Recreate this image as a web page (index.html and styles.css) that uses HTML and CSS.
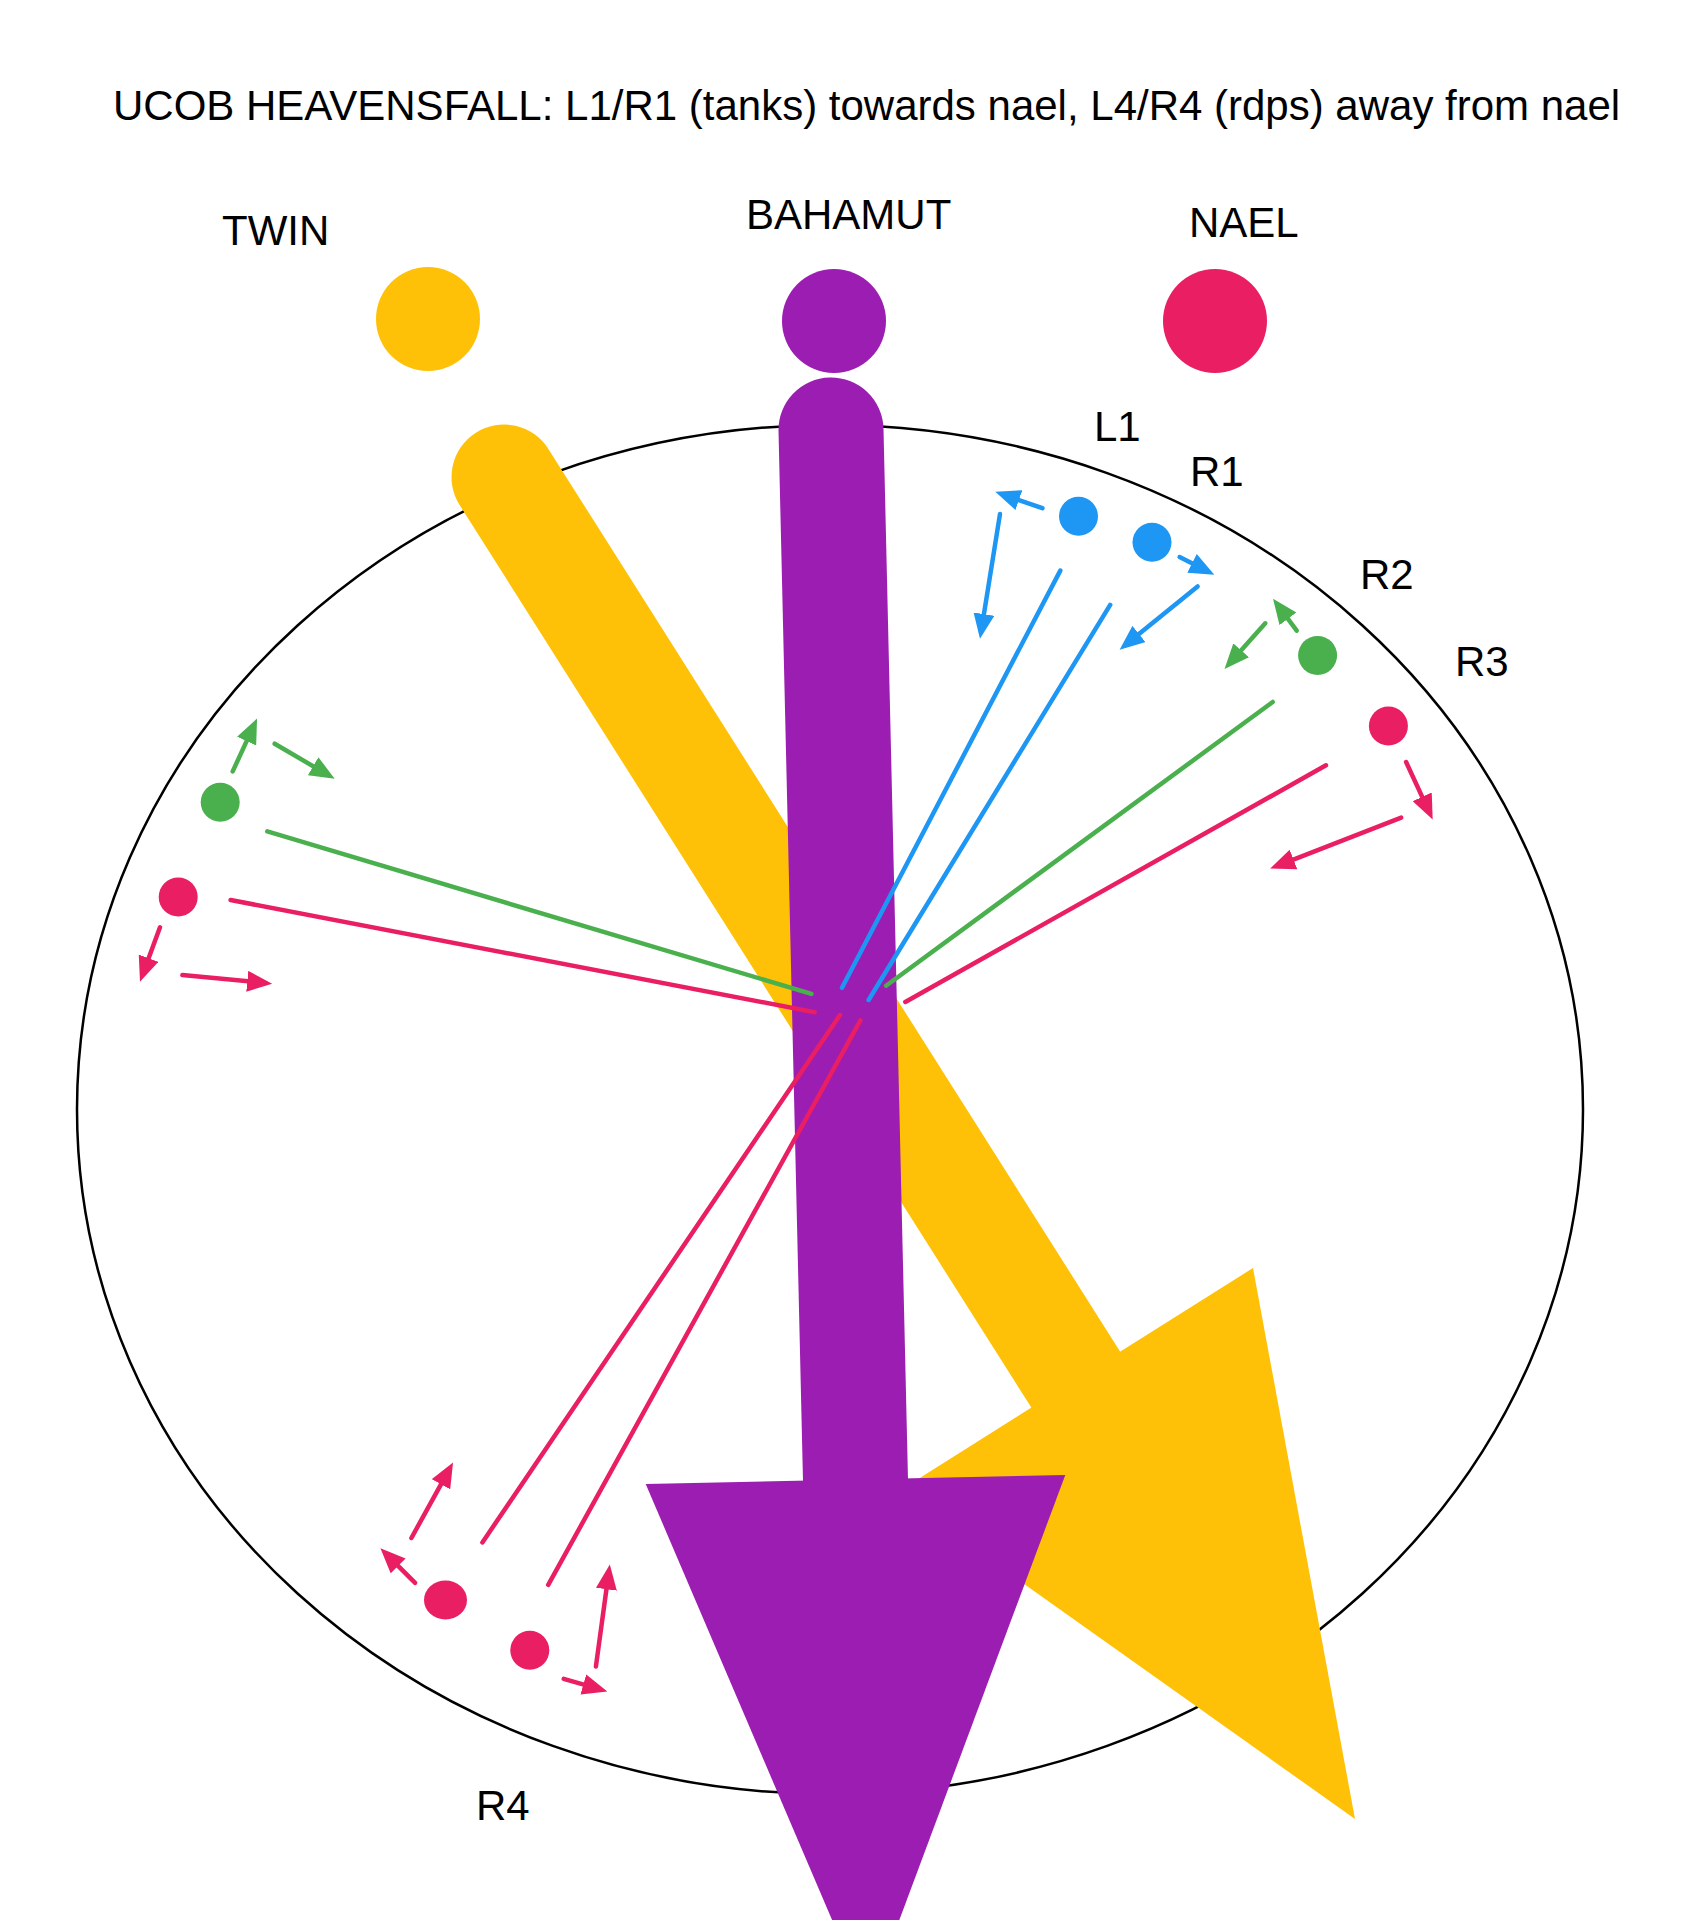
FILE: index.html
```html
<!DOCTYPE html>
<html lang="en">
<head>
<meta charset="utf-8">
<title>UCOB Heavensfall</title>
<link rel="stylesheet" href="styles.css">
</head>
<body>
<main class="page">
  <h1 class="title">UCOB HEAVENSFALL: L1/R1 (tanks) towards nael, L4/R4 (rdps) away from nael</h1>
  <svg class="diagram" width="1700" height="1790" viewBox="0 130 1700 1790" xmlns="http://www.w3.org/2000/svg">
    <defs>
      <marker id="head-blue" class="head head-blue" viewBox="0 0 25 21" refX="16" refY="10.5" markerWidth="25" markerHeight="21" markerUnits="userSpaceOnUse" orient="auto"><path d="M0,0 L25,10.5 L0,21 z"/></marker>
      <marker id="head-green" class="head head-green" viewBox="0 0 25 21" refX="16" refY="10.5" markerWidth="25" markerHeight="21" markerUnits="userSpaceOnUse" orient="auto"><path d="M0,0 L25,10.5 L0,21 z"/></marker>
      <marker id="head-pink" class="head head-pink" viewBox="0 0 25 21" refX="16" refY="10.5" markerWidth="25" markerHeight="21" markerUnits="userSpaceOnUse" orient="auto"><path d="M0,0 L25,10.5 L0,21 z"/></marker>
    </defs>

    <!-- arena -->
    <ellipse class="arena" cx="830" cy="1109.5" rx="753" ry="684.5"/>

    <!-- boss markers -->
    <circle class="fill-yellow" cx="428" cy="319" r="52"/>
    <circle class="fill-purple" cx="834" cy="321" r="52"/>
    <circle class="fill-pink" cx="1215" cy="321" r="52"/>

    <!-- twin dive -->
    <line class="shaft shaft-yellow" x1="504" y1="477" x2="1076" y2="1380"/>
    <polygon class="fill-yellow" points="1253,1268 1355,1819 896,1493"/>

    <!-- bahamut dive -->
    <line class="shaft shaft-purple" x1="831" y1="430" x2="855.5" y2="1480"/>
    <polygon class="fill-purple" points="645.7,1484 1065.3,1475 868,2004"/>

    <!-- paths to center -->
    <line class="path path-blue" x1="1060.3" y1="570.6" x2="842" y2="987.8"/>
    <line class="path path-blue" x1="1110.2" y1="604.9" x2="868.6" y2="1000"/>
    <line class="path path-green" x1="1272.7" y1="702" x2="886.1" y2="985.7"/>
    <line class="path path-pink" x1="1326" y1="765.3" x2="905.3" y2="1002"/>
    <line class="path path-green" x1="267.3" y1="831.4" x2="811.4" y2="993.9"/>
    <line class="path path-pink" x1="230.6" y1="900" x2="814.7" y2="1012.2"/>
    <line class="path path-pink" x1="840" y1="1015" x2="482.4" y2="1542.4"/>
    <line class="path path-pink" x1="860.4" y1="1020.4" x2="548.2" y2="1584.9"/>

    <!-- players -->
    <circle class="fill-blue" cx="1078.5" cy="516.3" r="19.5"/>
    <circle class="fill-blue" cx="1152" cy="542.2" r="19.5"/>
    <circle class="fill-green" cx="1317.6" cy="655.4" r="19.5"/>
    <circle class="fill-pink" cx="1388.4" cy="726" r="19.5"/>
    <circle class="fill-green" cx="220.2" cy="802.2" r="19.5"/>
    <circle class="fill-pink" cx="178.2" cy="897" r="19.5"/>
    <ellipse class="fill-pink" cx="445.5" cy="1600" rx="21.5" ry="19.5"/>
    <circle class="fill-pink" cx="529.8" cy="1650.2" r="19.5"/>

    <!-- movement arrows -->
    <line class="move path-blue" marker-end="url(#head-blue)" x1="1042.4" y1="508.2" x2="1003.8" y2="494.8"/>
    <line class="move path-blue" marker-end="url(#head-blue)" x1="1000" y1="514" x2="981.4" y2="629.9"/>
    <line class="move path-blue" marker-end="url(#head-blue)" x1="1179.6" y1="557.1" x2="1206.3" y2="570.6"/>
    <line class="move path-blue" marker-end="url(#head-blue)" x1="1197.6" y1="586.5" x2="1126.6" y2="644.1"/>
    <line class="move path-green" marker-end="url(#head-green)" x1="1265.3" y1="623.3" x2="1230.5" y2="662.3"/>
    <line class="move path-green" marker-end="url(#head-green)" x1="1296.7" y1="630.6" x2="1278.4" y2="606"/>
    <line class="move path-pink" marker-end="url(#head-pink)" x1="1406.1" y1="762" x2="1428.9" y2="811.4"/>
    <line class="move path-pink" marker-end="url(#head-pink)" x1="1401.2" y1="817.6" x2="1278.6" y2="865.3"/>
    <line class="move path-green" marker-end="url(#head-green)" x1="232.7" y1="771.4" x2="253.3" y2="726.6"/>
    <line class="move path-green" marker-end="url(#head-green)" x1="274.7" y1="743.7" x2="326.9" y2="774.3"/>
    <line class="move path-pink" marker-end="url(#head-pink)" x1="160" y1="927.3" x2="143.1" y2="973.2"/>
    <line class="move path-pink" marker-end="url(#head-pink)" x1="182.4" y1="975.1" x2="263.2" y2="982.8"/>
    <line class="move path-pink" marker-end="url(#head-pink)" x1="415.1" y1="1582.9" x2="386.8" y2="1554.6"/>
    <line class="move path-pink" marker-end="url(#head-pink)" x1="411.4" y1="1538" x2="448.7" y2="1470.3"/>
    <line class="move path-pink" marker-end="url(#head-pink)" x1="595.9" y1="1666.5" x2="608.6" y2="1573.4"/>
    <line class="move path-pink" marker-end="url(#head-pink)" x1="563.7" y1="1678.8" x2="598.7" y2="1688.9"/>

    <!-- labels -->
    <text class="label" x="222" y="245">TWIN</text>
    <text class="label" x="746" y="229">BAHAMUT</text>
    <text class="label" x="1189" y="237">NAEL</text>
    <text class="label" x="1094" y="441">L1</text>
    <text class="label" x="1190" y="485.7">R1</text>
    <text class="label" x="1360" y="588.6">R2</text>
    <text class="label" x="1455" y="675.5">R3</text>
    <text class="label" x="476" y="1819.6">R4</text>
  </svg>
</main>
</body>
</html>
```

FILE: styles.css
```css
html, body {
  margin: 0;
  padding: 0;
  background: #ffffff;
}

body {
  width: 1700px;
  height: 1920px;
  overflow: hidden;
  font-family: "Liberation Sans", Arial, sans-serif;
  color: #000000;
}

.page {
  display: flex;
  flex-direction: column;
}

.title {
  margin: 0;
  padding: 82px 0 0 113px;
  font-size: 42px;
  line-height: 48px;
  font-weight: 400;
  white-space: nowrap;
}

.diagram {
  display: block;
}

.arena {
  fill: none;
  stroke: #000000;
  stroke-width: 2.5;
}

.fill-yellow { fill: #FFC107; }
.fill-purple { fill: #9C1DB1; }
.fill-pink { fill: #E91E63; }
.fill-blue { fill: #1E96F3; }
.fill-green { fill: #4AB04E; }

.shaft {
  stroke-width: 105;
  stroke-linecap: round;
  fill: none;
}
.shaft-yellow { stroke: #FFC107; }
.shaft-purple { stroke: #9C1DB1; }

.path,
.move {
  stroke-width: 4.5;
  stroke-linecap: round;
  fill: none;
}
.path-blue { stroke: #1E96F3; }
.path-green { stroke: #4AB04E; }
.path-pink { stroke: #E91E63; }

.head-blue path { fill: #1E96F3; }
.head-green path { fill: #4AB04E; }
.head-pink path { fill: #E91E63; }

.label {
  font-family: "Liberation Sans", Arial, sans-serif;
  font-size: 42px;
  fill: #000000;
}
```
